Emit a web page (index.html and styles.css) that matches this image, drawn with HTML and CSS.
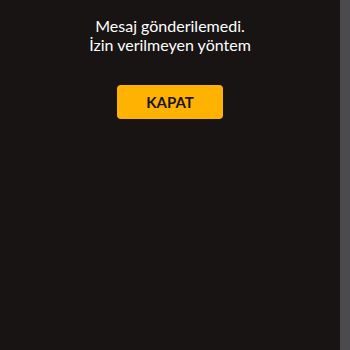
FILE: index.html
```html
<!DOCTYPE html>
<html lang="tr">
<head>
<meta charset="utf-8">
<link rel="stylesheet" href="styles.css">
</head>
<body>
<div class="page">
  <main class="content">
    <p class="message">Mesaj gönderilemedi.<br>İzin verilmeyen yöntem</p>
    <button class="close-btn">KAPAT</button>
  </main>
  <div class="scrollbar"></div>
</div>
</body>
</html>
```
FILE: styles.css
```css
html, body {
  margin: 0;
  padding: 0;
  height: 100%;
}
body {
  background: #181413;
  font-family: Lato, "Noto Sans", sans-serif;
}
.page {
  display: flex;
  height: 350px;
}
.content {
  flex: 1;
  display: flex;
  flex-direction: column;
  align-items: center;
  padding-top: 16px;
}
.message {
  margin: 0;
  color: #ffffff;
  font-size: 16px;
  line-height: 19px;
  text-align: center;
}
.close-btn {
  margin-top: 31px;
  width: 106px;
  height: 34px;
  background: #ffb300;
  border: none;
  border-radius: 4px;
  color: #1a1410;
  font-family: Lato, "Noto Sans", sans-serif;
  font-weight: 700;
  font-size: 15px;
}
.scrollbar {
  width: 10px;
  background: #4b4b4d;
}
```
